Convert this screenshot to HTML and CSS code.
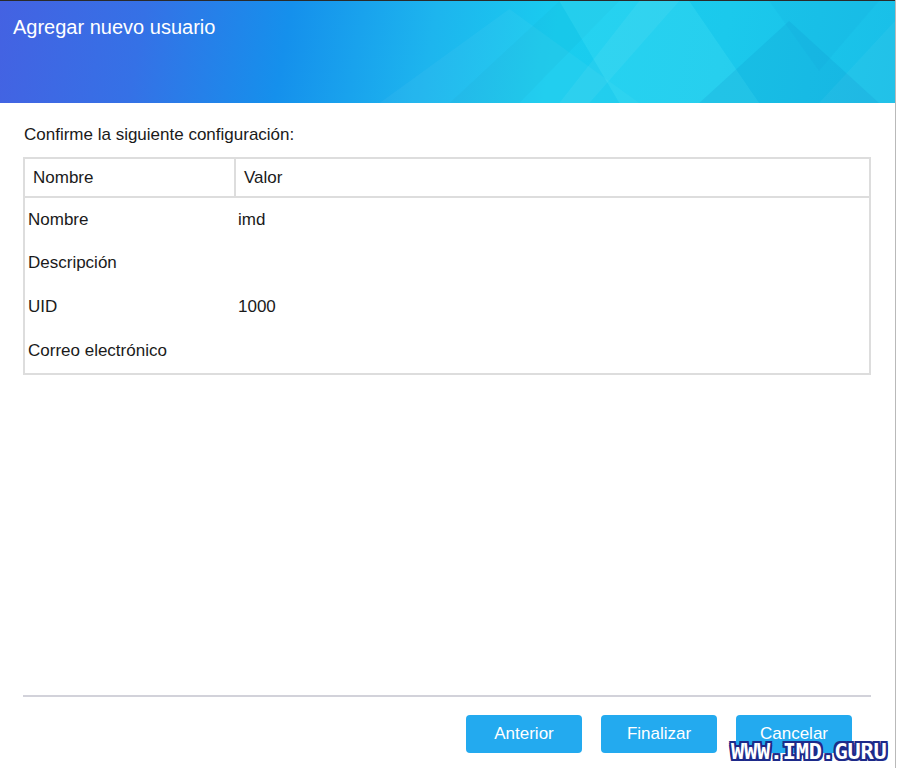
FILE: index.html
```html
<!DOCTYPE html>
<html lang="es">
<head>
    <meta charset="UTF-8">
    <meta name="viewport" content="width=device-width, initial-scale=1.0">
    <title>Agregar nuevo usuario</title>
    <link rel="stylesheet" href="styles.css">
</head>
<body>
    <div class="dialog">
        <div class="header">
            <svg class="header-art" viewBox="0 0 896 102" preserveAspectRatio="none">
                <polygon points="380,102 510,8 640,102" fill="#ffffff" opacity="0.04"/>
                <polygon points="450,102 560,0 620,0 520,102" fill="#000000" opacity="0.02"/>
                <polygon points="560,0 690,0 760,102 620,102" fill="#6ff6ff" opacity="0.14"/>
                <polygon points="640,0 680,0 590,102 560,102" fill="#ffffff" opacity="0.05"/>
                <polygon points="700,102 790,20 880,102" fill="#0a7fc0" opacity="0.14"/>
                <polygon points="770,0 880,0 820,70" fill="#0a8ac8" opacity="0.08"/>
                <polygon points="820,102 896,20 896,102" fill="#ffffff" opacity="0.04"/>
            </svg>
            <h1 class="title">Agregar nuevo usuario</h1>
        </div>

        <div class="content">
            <p class="intro">Confirme la siguiente configuración:</p>
            <table class="summary">
                <thead>
                    <tr><th class="col-name">Nombre</th><th>Valor</th></tr>
                </thead>
                <tbody>
                    <tr><td>Nombre</td><td>imd</td></tr>
                    <tr><td>Descripción</td><td></td></tr>
                    <tr><td>UID</td><td>1000</td></tr>
                    <tr><td>Correo electrónico</td><td></td></tr>
                </tbody>
            </table>
        </div>

        <div class="footer">
            <div class="buttons">
                <button class="btn">Anterior</button>
                <button class="btn">Finalizar</button>
                <button class="btn">Cancelar</button>
            </div>
        </div>

        <div class="watermark">WWW.IMD.GURU</div>
    </div>
</body>
</html>
```

FILE: styles.css
```css
body { margin: 0; background: #ffffff; font-family: "Liberation Sans", Arial, sans-serif; color: #1a1a1a; }
.dialog { position: relative; width: 896px; height: 768px; border-right: 1px solid #b9b9b9; display: flex; flex-direction: column; box-sizing: border-box; }
.header { position: relative; height: 103px; border-top: 1px solid #2a2a2a; box-sizing: border-box; overflow: hidden;
    background: linear-gradient(100deg, #4462e2 0%, #3571e6 16%, #1590ec 32%, #1db5ee 48%, #19cdef 62%, #1bc9ec 80%, #19bfe8 100%); }
.header-art { position: absolute; left: 0; top: 0; width: 100%; height: 100%; }
.title { position: relative; margin: 0; padding: 14px 0 0 13px; font-size: 20px; font-weight: normal; color: #ffffff; line-height: 24px; }
.content { flex: 1; padding: 0 24px 0 23px; }
.intro { margin: 22px 0 12px 1px; font-size: 17px; line-height: 20px; }
.summary { width: 100%; border-collapse: collapse; border: 2px solid #dddddd; font-size: 17px; }
.summary th { text-align: left; font-weight: normal; height: 37px; padding: 0 8px; border-bottom: 2px solid #dddddd; }
.summary th.col-name { width: 193px; border-right: 2px solid #dddddd; }
.summary td { height: 44px; padding: 0 3px; }
.summary tbody tr:first-child td { height: 43px; }
.footer { padding: 0 24px 15px 23px; }
.buttons { border-top: 2px solid #d2d2da; padding: 18px 19px 0 0; display: flex; justify-content: flex-end; gap: 19px; }
.btn { width: 116px; height: 38px; border: none; border-radius: 4px; background: #23aaef; color: #ffffff; font-family: "Liberation Sans", Arial, sans-serif; font-size: 17px; padding: 0; }
.watermark { position: absolute; left: 731px; top: 739px; font-family: "DejaVu Sans Mono", monospace; font-weight: bold; font-size: 22px; letter-spacing: -0.3px; color: #ffffff;
    text-shadow: 2px 0 0 #1d2a8a, -2px 0 0 #1d2a8a, 0 2px 0 #1d2a8a, 0 -2px 0 #1d2a8a, 2px 2px 0 #1d2a8a, -2px -2px 0 #1d2a8a, 2px -2px 0 #1d2a8a, -2px 2px 0 #1d2a8a; }
```
